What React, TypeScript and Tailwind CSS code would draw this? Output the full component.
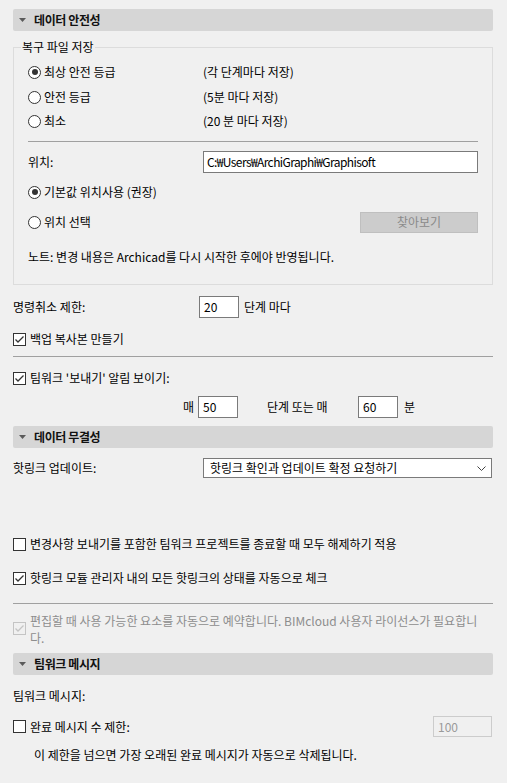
import React from "react";

function Header({ title }: { title: string }) {
  return (
    <div className="flex h-[22px] items-center rounded-[2px] bg-[#d6d6d6] pl-[6px]">
      <svg width="7" height="4" viewBox="0 0 7 4" className="mr-[8px]">
        <polygon points="0,0 7,0 3.5,4" fill="#5a5a5a" />
      </svg>
      <span className="font-bold tracking-[-0.4px] text-[#111]">{title}</span>
    </div>
  );
}

function Radio({ checked }: { checked?: boolean }) {
  return (
    <span className="mr-[3px] flex h-[13px] w-[13px] shrink-0 items-center justify-center rounded-full border border-[#333] bg-white">
      {checked && <span className="h-[6px] w-[6px] rounded-full bg-[#333]" />}
    </span>
  );
}

function Check({ checked, disabled }: { checked?: boolean; disabled?: boolean }) {
  const c = disabled ? "#c4c4c4" : "#333";
  return (
    <span
      className={
        disabled
          ? "mr-[4px] flex h-[13px] w-[13px] shrink-0 items-center justify-center border border-[#c4c4c4] bg-[#f0f0f0]"
          : "mr-[4px] flex h-[13px] w-[13px] shrink-0 items-center justify-center border border-[#333] bg-white"
      }
    >
      {checked && (
        <svg width="11" height="11" viewBox="0 0 11 11">
          <polyline points="1.5,5.5 4,8 9.5,2.5" fill="none" stroke={c} strokeWidth="1.3" />
        </svg>
      )}
    </span>
  );
}

function Input({ value, w }: { value: string; w: string }) {
  return (
    <div className={`${w} flex h-[22px] items-center border border-[#7a7a7a] bg-white pl-[4px]`}>{value}</div>
  );
}

export default function App() {
  return (
    <div className="h-[783px] w-[507px] overflow-hidden bg-[#f0f0f0] pl-[13px] pr-[14px] pt-[9px] font-['Noto_Sans_CJK_KR',sans-serif] text-[12px] leading-[16px] text-[#000]">
      <Header title="데이터 안전성" />

      <fieldset className="m-0 mt-[8px] min-w-0 border border-[#dcdcdc] p-0">
        <legend className="ml-[7px] px-[1px] leading-[16px]">복구 파일 저장</legend>
        <div className="px-[14px] pb-[16px]">
          <div className="mt-[6px] flex h-[22px] items-center">
            <div className="flex w-[175px] items-center">
              <Radio checked />
              <span>최상 안전 등급</span>
            </div>
            <span>(각 단계마다 저장)</span>
          </div>
          <div className="flex h-[28px] items-center">
            <div className="flex w-[175px] items-center">
              <Radio />
              <span>안전 등급</span>
            </div>
            <span>(5분 마다 저장)</span>
          </div>
          <div className="flex h-[20px] items-center">
            <div className="flex w-[175px] items-center">
              <Radio />
              <span>최소</span>
            </div>
            <span>(20 분 마다 저장)</span>
          </div>
          <div className="mt-[10px] h-px bg-[#a0a0a0]" />
          <div className="mt-[9px] flex h-[22px] items-center">
            <span className="w-[175px]">위치:</span>
            <div className="flex h-[22px] w-[275px] items-center border border-[#7a7a7a] bg-white pl-[3px] tracking-[-0.6px]">
              C:₩Users₩ArchiGraphi₩Graphisoft
            </div>
          </div>
          <div className="mt-[8px] flex h-[22px] items-center">
            <Radio checked />
            <span>기본값 위치사용 (권장)</span>
          </div>
          <div className="mt-[8px] flex h-[22px] items-center">
            <Radio />
            <span>위치 선택</span>
            <div className="ml-auto flex h-[21px] w-[118px] items-center justify-center border border-[#bfbfbf] bg-[#cccccc] text-[#8a8a8a]">
              찾아보기
            </div>
          </div>
          <div className="mt-[13px] flex h-[22px] items-center">
            노트: 변경 내용은 Archicad를 다시 시작한 후에야 반영됩니다.
          </div>
        </div>
      </fieldset>

      <div className="mt-[11px] flex h-[22px] items-center">
        <span className="w-[186px]">명령취소 제한:</span>
        <Input value="20" w="w-[40px]" />
        <span className="ml-[5px]">단계 마다</span>
      </div>
      <div className="mt-[10px] flex h-[22px] items-center">
        <Check checked />
        <span>백업 복사본 만들기</span>
      </div>
      <div className="mt-[6px] h-px bg-[#a0a0a0]" />
      <div className="mt-[10px] flex h-[22px] items-center">
        <Check checked />
        <span>팀워크 '보내기' 알림 보이기:</span>
      </div>
      <div className="mt-[7px] flex h-[22px] items-center">
        <span className="ml-[170px] w-[15px]">매</span>
        <Input value="50" w="w-[40px]" />
        <span className="ml-[29px] w-[91px]">단계 또는 매</span>
        <Input value="60" w="w-[40px]" />
        <span className="ml-[6px]">분</span>
      </div>

      <div className="mt-[8px]">
        <Header title="데이터 무결성" />
      </div>
      <div className="mt-[10px] flex h-[20px] items-center">
        <span className="w-[190px]">핫링크 업데이트:</span>
        <div className="flex h-[20px] w-[289px] items-center border border-[#7a7a7a] bg-white pl-[6px] pr-[5px]">
          <span>핫링크 확인과 업데이트 확정 요청하기</span>
          <svg width="9" height="5" viewBox="0 0 9 5" className="ml-auto">
            <polyline points="0.5,0.5 4.5,4.5 8.5,0.5" fill="none" stroke="#444" strokeWidth="1" />
          </svg>
        </div>
      </div>
      <div className="mt-[55px] flex h-[22px] items-center">
        <Check />
        <span>변경사항 보내기를 포함한 팀워크 프로젝트를 종료할 때 모두 해제하기 적용</span>
      </div>
      <div className="mt-[12px] flex h-[22px] items-center">
        <Check checked />
        <span>핫링크 모듈 관리자 내의 모든 핫링크의 상태를 자동으로 체크</span>
      </div>
      <div className="mt-[14px] h-px bg-[#a0a0a0]" />
      <div className="mt-[8px] flex">
        <div className="mt-[10px]">
          <Check checked disabled />
        </div>
        <span className="whitespace-nowrap leading-[17px] text-[#8d8d8d]">
          편집할 때 사용 가능한 요소를 자동으로 예약합니다. BIMcloud 사용자 라이선스가 필요합니
          <br />
          다.
        </span>
      </div>

      <div className="mt-[7px]">
        <Header title="팀워크 메시지" />
      </div>
      <div className="mt-[10px] flex h-[22px] items-center">팀워크 메시지:</div>
      <div className="mt-[9px] flex h-[21px] items-center">
        <Check />
        <span>완료 메시지 수 제한:</span>
        <div className="ml-auto mr-[1px] flex h-[21px] w-[59px] items-center border border-[#cccccc] bg-[#f0f0f0] pl-[4px] text-[#9a9a9a]">
          100
        </div>
      </div>
      <div className="mt-[7px] flex h-[22px] items-center pl-[21px]">
        이 제한을 넘으면 가장 오래된 완료 메시지가 자동으로 삭제됩니다.
      </div>
    </div>
  );
}
